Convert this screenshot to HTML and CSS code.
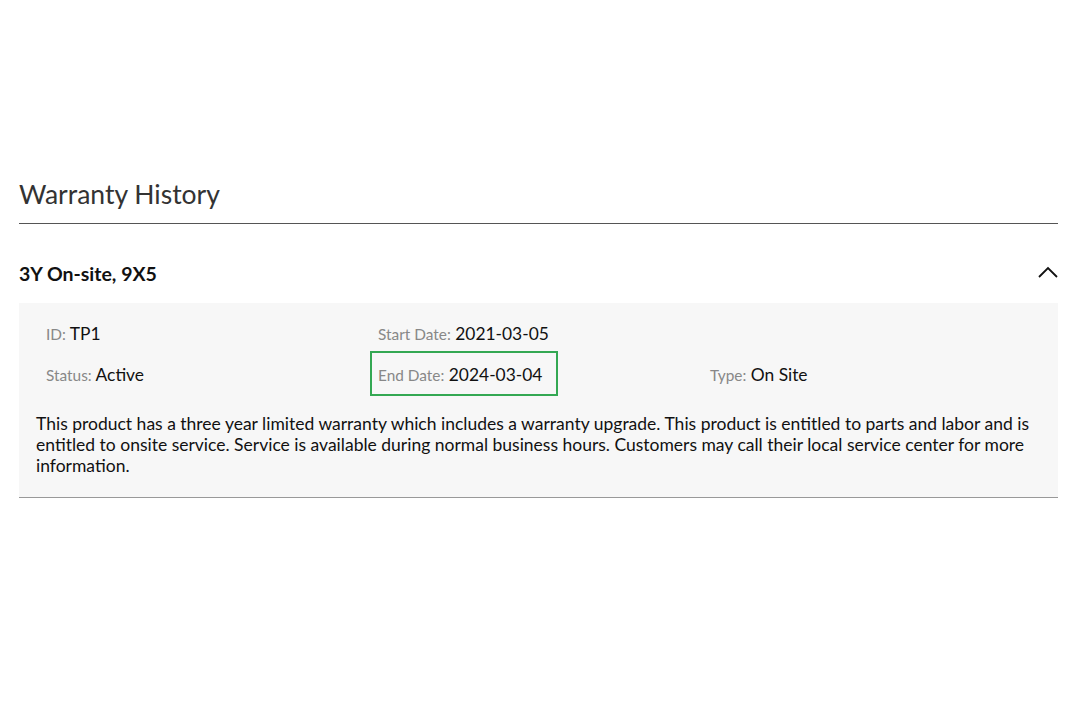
FILE: index.html
```html
<!DOCTYPE html>
<html lang="en">
<head>
<meta charset="utf-8">
<link rel="stylesheet" href="styles.css">
</head>
<body>
<section class="warranty">
  <h2 class="title">Warranty History</h2>
  <div class="item">
    <div class="item-head">
      <span class="item-name">3Y On-site, 9X5</span>
      <svg class="chevron" width="20" height="12" viewBox="0 0 20 12"><path d="M1 11 L10 2 L19 11" fill="none" stroke="#111" stroke-width="1.8"/></svg>
    </div>
    <div class="panel">
      <div class="fields">
        <div class="field"><span class="label">ID:</span> <span class="value">TP1</span></div>
        <div class="field"><span class="label">Start Date:</span> <span class="value">2021-03-05</span></div>
        <div class="field"></div>
        <div class="field"><span class="label">Status:</span> <span class="value">Active</span></div>
        <div class="field"><span class="hl"><span class="label">End Date:</span> <span class="value">2024-03-04</span></span></div>
        <div class="field"><span class="label">Type:</span> <span class="value">On Site</span></div>
      </div>
      <p class="desc">This product has a three year limited warranty which includes a warranty upgrade. This product is entitled to parts and labor and is entitled to onsite service. Service is available during normal business hours. Customers may call their local service center for more information.</p>
    </div>
  </div>
</section>
</body>
</html>
```
FILE: styles.css
```css
html, body {
  margin: 0;
  padding: 0;
  background: #fff;
}
body {
  font-family: Lato, "Open Sans", sans-serif;
  color: #111;
}
.warranty {
  width: 1039px;
  margin-left: 19px;
  padding-top: 172px;
}
.title {
  margin: 0;
  font-size: 26.5px;
  font-weight: 400;
  color: #333;
  line-height: 44px;
  padding-bottom: 7px;
  border-bottom: 1px solid #555;
}
.item-head {
  display: flex;
  justify-content: space-between;
  align-items: center;
  box-sizing: border-box;
  height: 79px;
  padding-top: 19px;
}
.item-name {
  font-size: 19.5px;
  font-weight: 700;
  color: #111;
}
.chevron {
  margin-top: -2px;
}
.panel {
  background: #f7f7f7;
  border-bottom: 1px solid #999;
  padding: 10px 17px 21px 17px;
}
.fields {
  display: grid;
  grid-template-columns: 332px 332px 332px;
  grid-auto-rows: 41px;
  align-items: center;
}
.field {
  padding-left: 10px;
  font-size: 17.4px;
}
.label {
  font-size: 15.4px;
  color: #888;
}
.value {
  color: #111;
}
.hl {
  position: relative;
}
.hl::after {
  content: "";
  position: absolute;
  left: -8px;
  right: -16px;
  top: -13px;
  bottom: -11px;
  border: 2px solid #34a853;
}
.desc {
  margin: 18px 0 0 0;
  font-size: 17.5px;
  line-height: 21px;
  color: #111;
}
```
